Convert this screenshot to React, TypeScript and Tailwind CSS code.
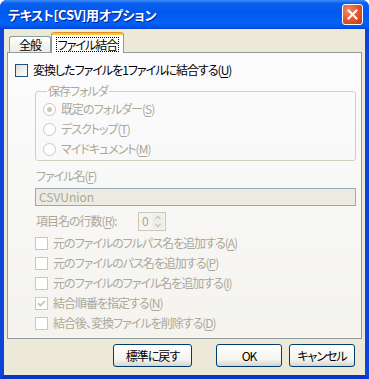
import React from 'react'

type Opt = { label: string; k: string; checked?: boolean; disabled?: boolean }

function Mnemonic({ label, k }: { label: string; k: string }) {
  return (
    <>
      {label}(<span className="underline underline-offset-[2px]">{k}</span>)
    </>
  )
}

function CheckBox({ label, k, checked = false, disabled = false }: Opt) {
  return (
    <div className="flex h-[20px] items-center">
      <span
        className={
          disabled
            ? 'flex h-[13px] w-[13px] shrink-0 items-center justify-center border border-[#CAC8BB] bg-white'
            : 'flex h-[13px] w-[13px] shrink-0 items-center justify-center border border-[#1C5180] bg-[linear-gradient(135deg,#DCDCD7,#FFFFFF)]'
        }
      >
        {checked && (
          <svg width="9" height="9" viewBox="0 0 9 9">
            <path d="M1 4.2 L3.4 6.6 L8 1.8" stroke={disabled ? '#CAC8BB' : '#21A121'} strokeWidth="1.8" fill="none" />
          </svg>
        )}
      </span>
      <span className={disabled ? 'ml-[5px] text-[#ACA899]' : 'ml-[5px] text-black'}>
        <Mnemonic label={label} k={k} />
      </span>
    </div>
  )
}

function Radio({ label, k, checked = false }: Opt) {
  return (
    <div className="flex h-[20px] items-center">
      <span className="flex h-[13px] w-[13px] shrink-0 items-center justify-center rounded-full border border-[#CAC8BB] bg-white">
        {checked && <span className="h-[5px] w-[5px] rounded-full bg-[#CAC8BB]" />}
      </span>
      <span className="ml-[5px] text-[#ACA899]">
        <Mnemonic label={label} k={k} />
      </span>
    </div>
  )
}

function XpButton({ children, wide = false }: { children: React.ReactNode; wide?: boolean }) {
  return (
    <button
      className={`${wide ? 'w-[79px]' : 'w-[66px]'} h-[23px] rounded-[3px] border border-[#003C74] bg-[linear-gradient(to_bottom,#FFFFFF,#F3F3EF_70%,#D8D3C8)] text-[12px] leading-[14px] text-black`}
    >
      {children}
    </button>
  )
}

const options: Opt[] = [
  { label: '元のファイルのフルパス名を追加する', k: 'A' },
  { label: '元のファイルのパス名を追加する', k: 'P' },
  { label: '元のファイルのファイル名を追加する', k: 'I' },
  { label: '結合順番を指定する', k: 'N', checked: true },
  { label: '結合後、変換ファイルを削除する', k: 'D' },
]

export default function App() {
  return (
    <div className="flex h-[379px] w-[369px] flex-col overflow-hidden rounded-t-[7px] bg-[#0A46DB] font-['Noto_Sans_CJK_JP',sans-serif] text-[12px] leading-[14px] tracking-[-1px] [font-feature-settings:'palt']">
      {/* Title bar */}
      <div className="flex h-[29px] shrink-0 items-center bg-[linear-gradient(to_bottom,#3C8CF8,#0A5FEE_12%,#0058EE_40%,#0062F7_80%,#0055EA_92%,#0040D2)] pl-[8px] pr-[6px]">
        <span className="flex-1 text-[13px] font-bold tracking-[-0.3px] text-white [text-shadow:1px_1px_0_#0A1A8C]">
          テキスト[CSV]用オプション
        </span>
        <div className="flex h-[21px] w-[21px] items-center justify-center rounded-[3px] border border-white bg-[radial-gradient(circle_at_30%_30%,#F08A68,#E0522A_55%,#C23A12)]">
          <svg width="11" height="11" viewBox="0 0 11 11">
            <path d="M1.5 1.5 L9.5 9.5 M9.5 1.5 L1.5 9.5" stroke="white" strokeWidth="2" strokeLinecap="square" />
          </svg>
        </div>
      </div>

      {/* Client area */}
      <div className="flex flex-1 flex-col border-x-[4px] border-b-[4px] border-x-[#0B45DA] border-b-[#0834C8] bg-[#ECE9D8] pt-[3px]">
        {/* Tabs */}
        <div className="relative z-10 flex h-[20px] items-end pl-[5px]">
          <div className="flex h-[16px] w-[42px] items-center justify-center rounded-t-[3px] border border-b-0 border-[#919B9C] bg-[linear-gradient(to_bottom,#FFFFFF,#ECEBE6)]">
            全般
          </div>
          <div className="-mb-px flex h-[21px] w-[73px] flex-col rounded-t-[3px] border-x border-[#919B9C] bg-white">
            <div className="h-[3px] rounded-t-[3px] border-t border-[#E68B2C] bg-[#FFC73C]" />
            <div className="flex flex-1 items-center justify-center">
              <span className="border border-dotted border-black px-[1px] leading-[13px]">ファイル結合</span>
            </div>
          </div>
        </div>

        {/* Panel */}
        <div className="mx-[3px] flex h-[287px] flex-col border border-[#919B9C] bg-[linear-gradient(to_bottom,#FCFCFE,#F4F3EE)] pl-[7px] pr-[5px] pt-[7px]">
          <CheckBox label="変換したファイルを1ファイルに結合する" k="U" />

          <fieldset className="ml-[20px] mt-[3px] rounded-[3px] border border-[#D0D0BF] pb-[1px] pl-[7px]">
            <legend className="ml-[4px] px-[1px] leading-[16px] text-[#ACA899]">保存フォルダ</legend>
            <Radio label="既定のフォルダー" k="S" checked />
            <Radio label="デスクトップ" k="T" />
            <Radio label="マイドキュメント" k="M" />
          </fieldset>

          <div className="ml-[21px] mt-[8px] text-[#ACA899]">
            <Mnemonic label="ファイル名" k="F" />
          </div>
          <div className="ml-[20px] mt-[5px] flex h-[18px] items-center border border-[#97A9B6] bg-[#EDECE3] pl-[3px] tracking-normal text-[#ACA899]">
            CSVUnion
          </div>

          <div className="ml-[21px] mt-[5px] flex h-[20px] items-center">
            <span className="w-[102px] shrink-0 text-[#ACA899]">
              <Mnemonic label="項目名の行数" k="R" />:
            </span>
            <div className="flex h-[19px] w-[28px] items-center border border-[#C9C7BA] bg-[#F5F4EE] pl-[3px] text-[#ACA899]">
              <span className="flex-1">0</span>
              <div className="mr-[1px] flex h-[15px] w-[12px] flex-col justify-between rounded-[2px] bg-[#EEEDE6]">
                <svg width="12" height="7" viewBox="0 0 12 7">
                  <path d="M3.5 5 L6 2.5 L8.5 5" stroke="#C9C7BA" strokeWidth="1.3" fill="none" />
                </svg>
                <svg width="12" height="7" viewBox="0 0 12 7">
                  <path d="M3.5 2 L6 4.5 L8.5 2" stroke="#C9C7BA" strokeWidth="1.3" fill="none" />
                </svg>
              </div>
            </div>
          </div>

          <div className="ml-[20px] mt-[2px] flex flex-col">
            {options.map(o => (
              <CheckBox key={o.k} label={o.label} k={o.k} checked={o.checked} disabled />
            ))}
          </div>
        </div>

        {/* Buttons */}
        <div className="mt-[5px] flex justify-end gap-[7px] pr-[10px]">
          <div className="mr-[17px]">
            <XpButton wide>標準に戻す</XpButton>
          </div>
          <XpButton>OK</XpButton>
          <XpButton>キャンセル</XpButton>
        </div>
      </div>
    </div>
  )
}
